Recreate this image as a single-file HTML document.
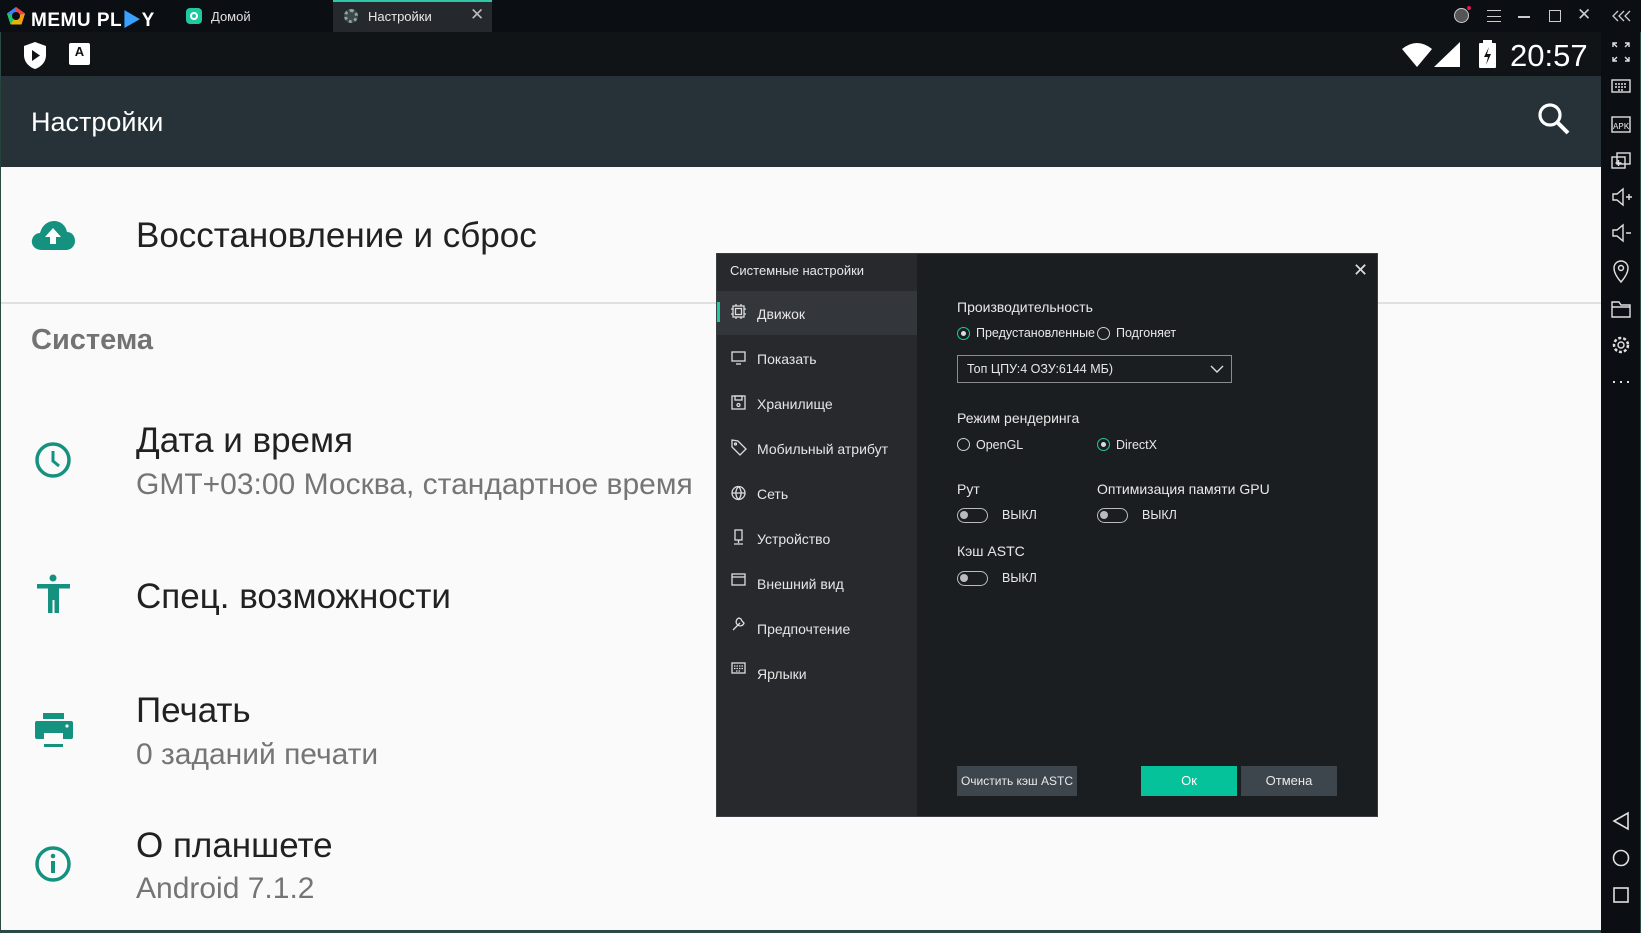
<!DOCTYPE html><html><head><meta charset="utf-8"><style>
*{margin:0;padding:0;box-sizing:border-box}
body{width:1641px;height:933px;overflow:hidden;background:#2c4a44;font-family:"Liberation Sans","Noto Sans CJK SC",sans-serif;position:relative}
.a{position:absolute}
.t{white-space:nowrap}
#top{left:0;top:0;width:1641px;height:32px;background:#0b0e12}
#sb{left:1px;top:32px;width:1600px;height:44px;background:#111417}
#ab{left:1px;top:76px;width:1600px;height:91px;background:#263238;box-shadow:0 3px 6px rgba(0,0,0,.25)}
#ct{left:1px;top:167px;width:1600px;height:763px;background:#fafafa}
#side{left:1601px;top:32px;width:39px;height:901px;background:#0b0e12}
.big{font-size:35px;color:#212121}
.sub{font-size:30px;color:#757575}
.dl{font-size:13.5px;color:#e8e8e8}
.mi{font-size:14px;color:#e6e6e6}
.rad{width:13px;height:13px;border:1.5px solid #cfcfcf;border-radius:50%}
.rad.on{border-color:#1fc9a0}
.rad.on:after{content:"";position:absolute;left:2.5px;top:2.5px;width:5px;height:5px;border-radius:50%;background:#ddd}
.tg{width:31px;height:15px;border:1.5px solid #bbb;border-radius:8px}
.tg:after{content:"";position:absolute;left:2px;top:2px;width:8px;height:8px;border-radius:50%;background:#bbb}
</style></head><body>
<div id="top" class="a"></div>
<svg class="a" style="left:6px;top:6px" width="20" height="20" viewBox="0 0 20 20"><polygon points="10,1 19,7.5 15.5,18.5 4.5,18.5 1,7.5" fill="#8b5cf6"/><polygon points="10,1 19,7.5 10,10" fill="#ef4444"/><polygon points="19,7.5 15.5,18.5 10,10" fill="#f59e0b"/><polygon points="15.5,18.5 4.5,18.5 10,10" fill="#eab308"/><polygon points="4.5,18.5 1,7.5 10,10" fill="#22c55e"/><polygon points="1,7.5 10,1 10,10" fill="#3b82f6"/><circle cx="10" cy="10" r="4" fill="#0b0e12"/></svg>
<div class="a t" style="left:31px;top:5px;font-size:19px;font-weight:bold;color:#fff;letter-spacing:.5px">MEMU PL<span style="color:#3aa0ff">▶</span>Y</div>
<div class="a" style="left:186px;top:8px;width:16px;height:16px;border-radius:4px;background:#1fc9a0"></div>
<div class="a" style="left:190px;top:12px;width:8px;height:8px;border-radius:50%;border:2px solid #fff"></div>
<div class="a t" style="left:211px;top:9px;font-size:13px;color:#e0e0e0">Домой</div>
<div class="a" style="left:333px;top:0;width:159px;height:32px;background:#25292d;border-top:2px solid #2fc7a8"></div>
<div class="a" style="left:344px;top:9px;width:14px;height:14px;border-radius:50%;border:3px dotted #8fa4a0;background:#3a4a48"></div>
<div class="a t" style="left:368px;top:9px;font-size:13px;color:#e8e8e8">Настройки</div>
<div class="a t" style="left:470px;top:5px;font-size:17px;color:#bbb">✕</div>
<div class="a" style="left:1454px;top:8px;width:15px;height:15px;border-radius:50%;border:1.5px solid #ccc;background:#555"></div>
<div class="a" style="left:1467px;top:6px;width:4px;height:4px;border-radius:50%;background:#e6174d"></div>
<div class="a" style="left:1487px;top:10px;width:14px;height:12px;border-top:1.5px solid #ccc;border-bottom:1.5px solid #ccc"></div>
<div class="a" style="left:1487px;top:15.5px;width:14px;height:1.5px;background:#ccc"></div>
<div class="a" style="left:1518px;top:16px;width:12px;height:1.5px;background:#ccc"></div>
<div class="a" style="left:1549px;top:10px;width:12px;height:12px;border:1.5px solid #ccc"></div>
<div class="a t" style="left:1577px;top:5px;font-size:17px;color:#ccc">✕</div>
<svg class="a" style="left:1612px;top:10px" width="22" height="12" viewBox="0 0 22 12" fill="none" stroke="#ccc" stroke-width="1.3"><path d="M6 1 L1 6 L6 11 M12 1 L7 6 L12 11 M18 1 L13 6 L18 11"/></svg>

<div id="sb" class="a"></div>
<svg class="a" style="left:22px;top:41px" width="26" height="29" viewBox="0 0 26 29"><path d="M13 1 L24 5 V14 C24 21 19 26 13 28 C7 26 2 21 2 14 V5Z" fill="#fff"/><path d="M10 9 L18 14.5 L10 20Z" fill="#111417"/></svg>
<div class="a" style="left:69px;top:43px;width:21px;height:22px;background:#fff;border-radius:2px;font-size:13px;font-weight:bold;color:#111;text-align:center;line-height:18px">A</div>
<svg class="a" style="left:1400px;top:41px" width="100" height="28" viewBox="0 0 100 28"><path d="M2 8 Q17 -4 32 8 L17 26Z" fill="#fff"/><path d="M60 1 V26 H34Z" fill="#fff"/></svg>
<div class="a" style="left:1479px;top:43px;width:17px;height:25px;background:#fff;border-radius:1px"></div>
<div class="a" style="left:1483px;top:40px;width:9px;height:4px;background:#fff"></div>
<svg class="a" style="left:1481px;top:46px" width="13" height="20" viewBox="0 0 13 20"><path d="M8 1 L3 11 H7 L5 19 L10 8 H6Z" fill="#111"/></svg>
<div class="a t" style="left:1510px;top:38px;font-size:31px;color:#fff">20:57</div>

<div id="ab" class="a"></div>
<div class="a t" style="left:31px;top:107px;font-size:27px;color:#fff">Настройки</div>
<svg class="a" style="left:1536px;top:101px" width="36" height="36" viewBox="0 0 36 36"><circle cx="14" cy="14" r="10" fill="none" stroke="#fff" stroke-width="3.2"/><path d="M21 21 L32 32" stroke="#fff" stroke-width="4"/></svg>

<div id="ct" class="a"></div>
<svg class="a" style="left:30px;top:218px" width="46" height="34" viewBox="0 0 46 34"><path d="M12 32 C4 32 1 26 2 22 C3 17 7 15 10 15 C12 7 18 3 24 3 C31 3 36 8 37 14 C42 14 45 18 45 23 C45 28 41 32 36 32Z" fill="#14917f"/><path d="M23 10 L31 19 H26 V26 H20 V19 H15Z" fill="#fff"/></svg>
<div class="a t big" style="left:136px;top:216px">Восстановление и сброс</div>
<div class="a" style="left:1px;top:302px;width:716px;height:2px;background:#e0e0e0"></div>
<div class="a" style="left:1377px;top:302px;width:224px;height:2px;background:#e0e0e0"></div>
<div class="a t" style="left:31px;top:324px;font-size:29px;font-weight:bold;color:#737373">Система</div>
<svg class="a" style="left:34px;top:441px" width="40" height="40" viewBox="0 0 40 40"><circle cx="19" cy="19" r="16" fill="none" stroke="#14917f" stroke-width="3.5"/><path d="M19 10 V20 L25 25" fill="none" stroke="#14917f" stroke-width="3"/></svg>
<div class="a t big" style="left:136px;top:421px">Дата и время</div>
<div class="a t sub" style="left:136px;top:468px">GMT+03:00 Москва, стандартное время</div>
<svg class="a" style="left:36px;top:574px" width="36" height="40" viewBox="0 0 36 40"><circle cx="17" cy="4" r="3.5" fill="#14917f"/><rect x="1" y="10" width="33" height="4.5" fill="#14917f"/><rect x="12" y="10" width="11" height="16" fill="#14917f"/><rect x="12" y="24" width="4.5" height="15" fill="#14917f"/><rect x="18.5" y="24" width="4.5" height="15" fill="#14917f"/></svg>
<div class="a t big" style="left:136px;top:577px">Спец. возможности</div>
<svg class="a" style="left:34px;top:712px" width="40" height="36" viewBox="0 0 40 36"><rect x="9" y="1" width="21" height="6" fill="#14917f"/><rect x="1" y="9" width="38" height="18" rx="2" fill="#14917f"/><rect x="10" y="21" width="19" height="12" fill="#fafafa"/><circle cx="33" cy="14" r="1.6" fill="#fafafa"/><rect x="10" y="32" width="19" height="3" fill="#14917f"/></svg>
<div class="a t big" style="left:136px;top:691px">Печать</div>
<div class="a t sub" style="left:136px;top:738px">0 заданий печати</div>
<svg class="a" style="left:34px;top:845px" width="40" height="40" viewBox="0 0 40 40"><circle cx="19" cy="19" r="16" fill="none" stroke="#14917f" stroke-width="3.5"/><rect x="17" y="16" width="4" height="12" fill="#14917f"/><circle cx="19" cy="11" r="2.3" fill="#14917f"/></svg>
<div class="a t big" style="left:136px;top:826px">О планшете</div>
<div class="a t sub" style="left:136px;top:872px">Android 7.1.2</div>

<div id="side" class="a"></div>
<svg class="a" style="left:1601px;top:40px" width="40" height="870" viewBox="0 0 40 870" fill="none" stroke="#e0e0e0" stroke-width="1.4">
<path d="M12 7 V3 H16 M24 3 H28 V7 M12 17 V21 H16 M24 21 H28 V17 M12 3 L16 7 M28 3 L24 7 M12 21 L16 17 M28 21 L24 17"/>
<rect x="11" y="40" width="18" height="12"/><path d="M14 44 H26 M14 47 H26 M17 50 H23" stroke-dasharray="2 1"/>
<rect x="11" y="77" width="18" height="15"/><text x="12" y="89" font-size="9" fill="#e0e0e0" stroke="none" font-family="Liberation Mono">APK</text>
<rect x="16" y="113" width="13" height="11"/><rect x="11" y="117" width="13" height="11"/><path d="M17.5 120 V126 M14.5 123 H20.5"/>
<path d="M12 154 H16 L22 149 V165 L16 160 H12Z M25 157 H31 M28 154 V160"/>
<path d="M12 190 H16 L22 185 V201 L16 196 H12Z M25 193 H30"/>
<path d="M20 242 C13 234 13 230 13 228 A7 7 0 0 1 27 228 C27 230 27 234 20 242Z"/><circle cx="20" cy="228" r="2.5"/>
<path d="M11 262 H18 L20 265 H29 V277 H11Z M11 267 H29"/>
<circle cx="20" cy="305" r="3"/><circle cx="20" cy="305" r="7" stroke-dasharray="3 2" stroke-width="2.5"/>
<path d="M12 342 H14 M19 342 H21 M26 342 H28" stroke-width="2"/>
</svg>
<svg class="a" style="left:1601px;top:808px" width="40" height="100" viewBox="0 0 40 100" fill="none" stroke="#e0e0e0" stroke-width="1.6"><path d="M27 5 V21 L13 13Z"/><circle cx="20" cy="50" r="7.5"/><rect x="13" y="80" width="14" height="14"/></svg>

<!-- dialog -->
<div class="a" style="left:716px;top:253px;width:662px;height:564px;background:#1b1e21;border:1px solid #3a3e42"></div>
<div class="a" style="left:717px;top:254px;width:200px;height:562px;background:#27292c"></div>
<div class="a t dl" style="left:730px;top:263px;font-size:13px">Системные настройки</div>
<div class="a" style="left:717px;top:291px;width:200px;height:44px;background:#33363a"></div>
<div class="a" style="left:717px;top:302px;width:3px;height:20px;background:#1fc9a0"></div>
<svg class="a" style="left:731px;top:300px" width="400" height="390" viewBox="0 0 400 390" fill="none" stroke="#ddd" stroke-width="1.3">
<rect x="2" y="6" width="11" height="11"/><rect x="4.5" y="8.5" width="6" height="6"/><path d="M0 9 H2 M0 14 H2 M13 9 H15 M13 14 H15 M5 4 V6 M10 4 V6 M5 17 V19 M10 17 V19"/>
<rect x="1" y="52" width="13" height="9"/><path d="M5 64 H10"/>
<rect x="1" y="96" width="13" height="13"/><rect x="4" y="96" width="7" height="4"/><circle cx="7.5" cy="105" r="1.5"/>
<path d="M1 140 V147 L9 155 L15 149 L7 141Z"/><circle cx="4.5" cy="144" r="1"/>
<circle cx="7.5" cy="193" r="6.5"/><path d="M1 193 H14 M7.5 186.5 C4 190 4 196 7.5 199.5 C11 196 11 190 7.5 186.5"/>
<rect x="4" y="230" width="7" height="10"/><path d="M7.5 240 V243 M3 244 H12"/>
<rect x="1" y="274" width="13" height="11"/><path d="M1 277 H14"/>
<path d="M2 330 L9 323 M8 318 A4 4 0 1 0 13 323 L11 321 L10 319Z"/>
<rect x="1" y="363" width="13" height="10"/><path d="M3 366 H12 M3 368.5 H12 M5 371 H10" stroke-dasharray="1.5 1"/>
</svg>
<div class="a t mi" style="left:757px;top:306px">Движок</div>
<div class="a t mi" style="left:757px;top:351px">Показать</div>
<div class="a t mi" style="left:757px;top:396px">Хранилище</div>
<div class="a t mi" style="left:757px;top:441px">Мобильный атрибут</div>
<div class="a t mi" style="left:757px;top:486px">Сеть</div>
<div class="a t mi" style="left:757px;top:531px">Устройство</div>
<div class="a t mi" style="left:757px;top:576px">Внешний вид</div>
<div class="a t mi" style="left:757px;top:621px">Предпочтение</div>
<div class="a t mi" style="left:757px;top:666px">Ярлыки</div>
<div class="a t" style="left:1353px;top:260px;font-size:18px;color:#ddd">✕</div>

<div class="a t dl" style="left:957px;top:299px;font-size:14px">Производительность</div>
<div class="a rad on" style="left:957px;top:327px"></div>
<div class="a t dl" style="left:976px;top:326px;font-size:12.5px">Предустановленные</div>
<div class="a rad" style="left:1097px;top:327px"></div>
<div class="a t dl" style="left:1116px;top:326px;font-size:12.5px">Подгоняет</div>
<div class="a" style="left:957px;top:355px;width:275px;height:28px;border:1px solid #8a8d90"></div>
<div class="a t dl" style="left:967px;top:362px;font-size:12.5px">Топ ЦПУ:4 ОЗУ:6144 МБ)</div>
<svg class="a" style="left:1210px;top:364px" width="14" height="10" viewBox="0 0 14 10"><path d="M1 2 L7 8 L13 2" fill="none" stroke="#ddd" stroke-width="1.4"/></svg>
<div class="a t dl" style="left:957px;top:410px;font-size:14px">Режим рендеринга</div>
<div class="a rad" style="left:957px;top:438px"></div>
<div class="a t dl" style="left:976px;top:438px;font-size:12.5px">OpenGL</div>
<div class="a rad on" style="left:1097px;top:438px"></div>
<div class="a t dl" style="left:1116px;top:438px;font-size:12.5px">DirectX</div>
<div class="a t dl" style="left:957px;top:481px;font-size:14px">Рут</div>
<div class="a t dl" style="left:1097px;top:481px;font-size:14px">Оптимизация памяти GPU</div>
<div class="a tg" style="left:957px;top:508px"></div>
<div class="a t dl" style="left:1002px;top:508px;font-size:12.5px">ВЫКЛ</div>
<div class="a tg" style="left:1097px;top:508px"></div>
<div class="a t dl" style="left:1142px;top:508px;font-size:12.5px">ВЫКЛ</div>
<div class="a t dl" style="left:957px;top:543px;font-size:14px">Кэш ASTC</div>
<div class="a tg" style="left:957px;top:571px"></div>
<div class="a t dl" style="left:1002px;top:571px;font-size:12.5px">ВЫКЛ</div>
<div class="a t dl" style="left:957px;top:766px;width:120px;height:30px;background:#3d464d;text-align:center;line-height:30px;font-size:12px">Очистить кэш ASTC</div>
<div class="a t" style="left:1141px;top:766px;width:96px;height:30px;background:#05c29a;color:#fff;text-align:center;line-height:30px;font-size:13px">Ок</div>
<div class="a t dl" style="left:1241px;top:766px;width:96px;height:30px;background:#3d464d;text-align:center;line-height:30px;font-size:13px">Отмена</div>
</body></html>
